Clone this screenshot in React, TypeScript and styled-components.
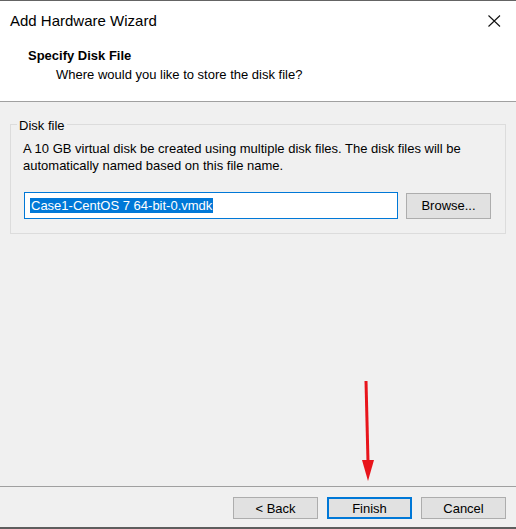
import React from "react";
import styled, { createGlobalStyle } from "styled-components";

const Global = createGlobalStyle`
  html, body { margin: 0; padding: 0; }
  body {
    font-family: "Liberation Sans", Arial, sans-serif;
    font-size: 13px;
    color: #000;
    background: #f0f0f0;
  }
`;

const Window = styled.div`
  position: relative;
  width: 516px;
  height: 529px;
  box-sizing: border-box;
  border-top: 1px solid #646464;
  border-bottom: 2px solid #5e5e5e;
  background: #f0f0f0;
  display: flex;
  flex-direction: column;
  overflow: hidden;
`;

const Header = styled.div`
  height: 100px;
  background: #ffffff;
  border-bottom: 1px solid #a0a0a0;
  flex-shrink: 0;
`;

const TitleBar = styled.div`
  height: 40px;
  display: flex;
  align-items: center;
  justify-content: space-between;
  padding: 0 15px 0 10px;
`;

const Title = styled.div`
  font-size: 15px;
  line-height: 20px;
  color: #000;
`;

const Heading = styled.div`
  margin-top: 6px;
  padding-left: 28px;
  font-weight: bold;
  line-height: 17px;
`;

const SubHeading = styled.div`
  margin-top: 2px;
  padding-left: 56px;
  line-height: 17px;
`;

const Content = styled.div`
  flex: 1;
  padding-top: 13px;
`;

const Group = styled.fieldset`
  margin: 0 10px;
  padding: 0 13px 14px 12px;
  border: 1px solid #dcdcdc;
  min-width: 0;
`;

const Legend = styled.legend`
  margin-left: -6px;
  padding: 4px 2px 0 2px;
  line-height: 14px;
`;

const Description = styled.p`
  margin: 7px 0 0 0;
  line-height: 17px;
`;

const InputRow = styled.div`
  margin-top: 18px;
  display: flex;
  align-items: center;
  gap: 8px;
`;

const FileBox = styled.div`
  width: 374px;
  height: 27px;
  box-sizing: border-box;
  margin-left: 1px;
  border: 1px solid #0078d7;
  background: #fff;
  display: flex;
  align-items: center;
  padding-left: 5px;
`;

const Selected = styled.span`
  background: #0078d7;
  color: #fff;
  line-height: 15px;
  padding: 0 1px;
`;

const Button = styled.button<{ $default?: boolean }>`
  width: 85px;
  height: 22px;
  box-sizing: border-box;
  background: #e1e1e1;
  border: ${(p) => (p.$default ? "2px solid #0078d7" : "1px solid #adadad")};
  font-family: "Liberation Sans", Arial, sans-serif;
  font-size: 13px;
  color: #000;
  padding: 0;
  margin: 0;
`;

const BrowseButton = styled(Button)`
  height: 26px;
`;

const Footer = styled.div`
  height: 41px;
  box-sizing: border-box;
  border-top: 1px solid #a0a0a0;
  padding: 10px 10px 0 0;
  display: flex;
  justify-content: flex-end;
  align-items: flex-start;
  gap: 9px;
  flex-shrink: 0;
`;

const Overlay = styled.svg`
  position: absolute;
  left: 0;
  top: -1px;
  pointer-events: none;
`;

const CloseIcon = () => (
  <svg width="13" height="12" viewBox="0 0 13 12">
    <path d="M0.5 0.5 L12 11.5 M12 0.5 L0.5 11.5" stroke="#111" strokeWidth="1.1" fill="none" />
  </svg>
);

export default function App() {
  return (
    <>
      <Global />
      <Window>
        <Header>
          <TitleBar>
            <Title>Add Hardware Wizard</Title>
            <CloseIcon />
          </TitleBar>
          <Heading>Specify Disk File</Heading>
          <SubHeading>Where would you like to store the disk file?</SubHeading>
        </Header>
        <Content>
          <Group>
            <Legend>Disk file</Legend>
            <Description>
              A 10 GB virtual disk be created using multiple disk files. The disk files will be
              <br />
              automatically named based on this file name.
            </Description>
            <InputRow>
              <FileBox>
                <Selected>Case1-CentOS 7 64-bit-0.vmdk</Selected>
              </FileBox>
              <BrowseButton>Browse...</BrowseButton>
            </InputRow>
          </Group>
        </Content>
        <Footer>
          <Button>&lt; Back</Button>
          <Button $default>Finish</Button>
          <Button>Cancel</Button>
        </Footer>
        <Overlay width="516" height="529" viewBox="0 0 516 529">
          <line x1="366" y1="381" x2="368" y2="462" stroke="#e8141b" strokeWidth="3" />
          <polygon points="362,460 374,460 368,481" fill="#e8141b" />
        </Overlay>
      </Window>
    </>
  );
}
